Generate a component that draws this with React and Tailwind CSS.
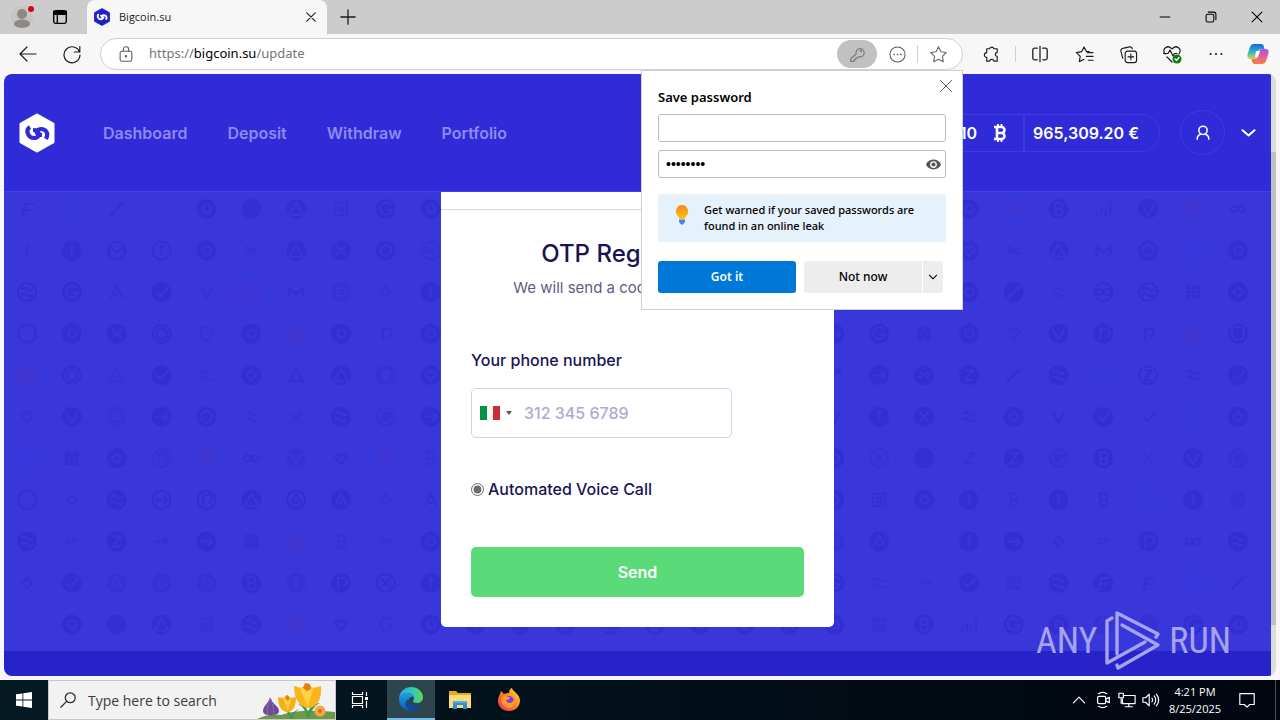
// App.jsx
import React, { useState } from 'react';

// Coin marks, each drawn in a 20x20 box
const MARKS = {
  a: 'M4 16L10 4l6 12M8 13h4',
  b: 'M7 4v12h4a3 3 0 0 0 0-6H7M11 10a3 3 0 0 0 0-6H5',
  c: 'M5 10l4 4 8-9',
  d: '',
  e: 'M4 7q3-3 6 0t6 0M4 13q3-3 6 0t6 0',
  f: 'M3 17h3L8 5h9M5 11h9',
  g: 'M15 6a6 6 0 1 0 1 5h-5',
  h: 'M4 4h3v3H4zM13 4h3v3h-3zM4 13h3v3H4zM13 13h3v3h-3zM10 3v14M3 10h14',
  i: 'M10 10c-2-4-7-4-7 0s5 4 7 0 7-4 7 0-5 4-7 0',
  j: 'M10 4l5 3v6l-5 3-5-3V7z',
  k: 'M10 16L4 8l3-3 3 3 3-3 3 3z',
  l: 'M10 5l5 5-5 5-5-5z',
  m: 'M3 15V6l7 6 7-6v9',
  n: 'M3 17v-5M8 17V9M12 17v-6M17 17V3',
  o: 'M10 6a4 4 0 1 0 1 0',
  p: 'M7 16V5h5a4 4 0 0 1 0 8',
  q: 'M10 5v10M8 7l2-2 2 2',
  r: 'M4 4h12v12H4zM8 8h4v4H8z',
  s: 'M3 17L17 3M12 4l4 4M4 13l3 3',
  t: 'M10 4l7 12H3z',
  u: 'M4 10h12M12 6l4 4-4 4',
  v: 'M4 5l6 11 6-11',
  w: 'M4 11a4 4 0 0 0 6-1 4 4 0 0 1 6-1M5 6l3 3M12 11l3 3',
  x: 'M5 5l10 10M15 5L5 15',
  y: 'M10 3l6 2v5c0 4-3 6-6 7-3-1-6-3-6-7V5z',
  z: 'M6 5h8l-8 10h8',
};

// lower case: bare mark, upper case: filled coin, "(" ring. Suffix: r red, b blue, f faint
const COIN_ROWS = [
  'f Cb s gr O D T rf G O | G T D O hr B n V Ir i',
  'qf Q (m (q O w T X J (wf | A Q L K w T m J Db O',
  '(e G a C vf Zr m (rf af Q | X D T O S ef (i (e h L',
  '(d O X (j yf O Dr O p O | U G h O kf V P p Or Y',
  'Dr (j tf C ef L t T (yf L | s U W Z s E Lb (z e C',
  'kf V (jf U J ef xf E Yf U | v Q X e L v C c lb L',
  'Db h L (pf Er i Vf k Er bf | O (xf D zf Z Gf B xf V Gf',
  '(d l E (u (p T (a A af a | O r O Q bf Q b rb Q hf',
  'E wf Z u U h Qr bf wf O | Of A rr Q U l w P i E',
  'l C Af Of Of B Qf P (x Q | G ef uf C hf E F f Ob s',
  'gr O D T rf E Vr k gf O | O hf B n G O Af Df G O',
];

// the middle columns share one run of coins
const MIDDLE = 'Q D Z T (a O L X';

const Coin = ({ code, x, y }) => {
  const ring = code[0] === '(';
  const body = ring ? code.slice(1) : code;
  const letter = body[0];
  const filled = !ring && letter === letter.toUpperCase();
  const tint = body[1];
  const color = tint === 'r' ? '#4c2cc0' : tint === 'b' ? '#2f3de0' : '#2c29cb';
  return (
    <g transform={`translate(${x} ${y})`} opacity={tint ? 0.3 : 0.5} fill="none" strokeWidth="2">
      {filled && <circle cx="10" cy="10" r="10" fill={color} />}
      {ring && <circle cx="10" cy="10" r="9" stroke={color} />}
      <path d={MARKS[letter.toLowerCase()]} stroke={filled ? '#3a37da' : color} />
    </g>
  );
};

const CoinPattern = () => (
  <svg className="absolute inset-0 h-full w-full" aria-hidden="true">
    {COIN_ROWS.map((row, r) =>
      row.replace('|', MIDDLE).split(' ').map((code, c) => (
        <Coin key={`${r}-${c}`} code={code} x={13 + c * 44.85} y={7 + r * 41.55} />
      ))
    )}
  </svg>
);

const Icon = ({ size = 20, children, className = '', width = 1.2 }) => (
  <svg
    width={size}
    height={size}
    viewBox="0 0 20 20"
    fill="none"
    stroke="currentColor"
    strokeWidth={width}
    strokeLinecap="round"
    strokeLinejoin="round"
    className={`shrink-0 ${className}`}
    aria-hidden="true"
  >
    {children}
  </svg>
);

const HexLogo = ({ className, hex, mark }) => (
  <svg viewBox="0 0 36 40" className={className} aria-hidden="true">
    <path d="M18 2L34 11v18L18 38 2 29V11z" fill={hex} stroke={hex} strokeWidth="3" strokeLinejoin="round" />
    <g fill="none" stroke={mark} strokeWidth="4.2">
      <path d="M11 14c-5 3-2 11 4 11 4 0 6-3 4-6-1-2-3-2-5-2" />
      <path d="M27 26c3-6 0-10-5-10-3 0-5 2-4 4 1 2 3 2 5 2" />
    </g>
  </svg>
);

const ToolButton = ({ label, children }) => (
  <button aria-label={label} className="flex h-8 w-11 items-center justify-center text-[#1b1b1b]">
    {children}
  </button>
);

const TabStrip = () => (
  <div className="flex h-[34px] bg-[#cccccc]">
    <button aria-label="Profile" className="flex w-11 items-center justify-center">
      <svg width="24" height="24" viewBox="0 0 24 24">
        <circle cx="12" cy="12" r="11" fill="#c8c4c2" />
        <circle cx="12" cy="9" r="5" fill="#8d8985" />
        <path d="M4 19c0-6 16-6 16 0 0 5-16 5-16 0z" fill="#8d8985" />
        <circle cx="21" cy="4" r="3" fill="#d1051b" />
      </svg>
    </button>
    <button aria-label="Tab actions" className="flex w-8 items-center justify-center">
      <Icon size={18} width={1.5}>
        <rect x="3" y="3" width="14" height="14" rx="2" />
        <path d="M3 4h14v3H3z" fill="currentColor" />
        <path d="M7 7v10" />
      </Icon>
    </button>
    <div className="ml-[11px] flex w-60 items-center rounded-t-lg bg-[#f7f7f7] pr-2 pl-1.5">
      <HexLogo className="h-[18px] w-[18px]" hex="#1d22c9" mark="#ffffff" />
      <span className="ml-2 flex-1 text-[11px] text-[#1b1b1b]">Bigcoin.su</span>
      <button aria-label="Close tab" className="flex h-4 w-4 items-center justify-center text-[#1b1b1b]">
        <Icon size={14} width={1.6}><path d="M4 4l12 12M16 4L4 16" /></Icon>
      </button>
    </div>
    <button aria-label="New tab" className="flex w-[42px] items-center justify-center text-[#1b1b1b]">
      <Icon size={18} width={1.4}><path d="M10 2v16M2 10h16" /></Icon>
    </button>
    <div className="ml-auto flex">
      <button aria-label="Minimize" className="flex w-[46px] items-center justify-center">
        <Icon size={14} width={1.5}><path d="M3 10h14" /></Icon>
      </button>
      <button aria-label="Restore" className="flex w-[46px] items-center justify-center">
        <Icon size={14} width={1.5}>
          <rect x="3" y="6" width="11" height="11" rx="2" />
          <path d="M6 3h8a3 3 0 0 1 3 3v8" />
        </Icon>
      </button>
      <button aria-label="Close" className="flex w-[46px] items-center justify-center">
        <Icon size={14} width={1.5}><path d="M3 3l14 14M17 3L3 17" /></Icon>
      </button>
    </div>
  </div>
);

const SavePassword = () => {
  const [password, setPassword] = useState('password');
  const [username, setUsername] = useState('');

  return (
    <section className="absolute top-full -right-px z-20 mt-px w-[322px] border border-[#cfcfcf] bg-white p-4 text-black">
      <button aria-label="Dismiss" className="absolute top-[7px] right-2 flex h-4 w-4 items-center justify-center text-[#5a5a5a]">
        <Icon size={16} width={1.2}><path d="M3 3l14 14M17 3L3 17" /></Icon>
      </button>
      <h2 className="text-[13px] leading-5 font-semibold">Save password</h2>
      <input
        aria-label="Username"
        value={username}
        onChange={(e) => setUsername(e.target.value)}
        className="mt-[7px] block h-7 w-full rounded-[3px] border border-[#bcbcbc] px-2 text-xs"
      />
      <div className="mt-2 flex h-7 items-center rounded-[3px] border border-[#bcbcbc] pr-1 pl-[7px]">
        <input
          aria-label="Password"
          type="password"
          value={password}
          onChange={(e) => setPassword(e.target.value)}
          className="min-w-0 flex-1 font-['Liberation_Sans'] text-[14px] outline-none"
        />
        <button aria-label="Show password" className="text-[#555]">
          <svg width="15" height="15" viewBox="0 0 16 16" aria-hidden="true" className="block">
            <path d="M0 8c3-7 13-7 16 0-3 7-13 7-16 0z" fill="currentColor" />
            <circle cx="8" cy="8" r="3.6" fill="#fff" />
            <circle cx="8" cy="8" r="2.2" fill="currentColor" />
          </svg>
        </button>
      </div>
      <div className="mt-4 flex h-12 items-center rounded-[3px] bg-[#e5f1fb] pr-2 pl-4">
        <svg width="16" height="22" viewBox="0 0 16 22" aria-hidden="true" className="-mt-1.5 shrink-0">
          <defs>
            <linearGradient id="bulb" x1="0" y1="0" x2="0" y2="1">
              <stop offset="0" stopColor="#f28a1c" />
              <stop offset="1" stopColor="#ffc20a" />
            </linearGradient>
          </defs>
          <path d="M8 1a6.300 6.300 0 0 0-4 11l1.500 3h5L12 12A6.300 6.300 0 0 0 8 1z" fill="url(#bulb)" />
          <path d="M5 15.500h6v2.500l-2 2.500H7L5 18z" fill="#4a83ea" />
        </svg>
        <p className="ml-3.5 text-[11px] leading-4 font-medium">
          Get warned if your saved passwords are
          <br />
          found in an online leak
        </p>
      </div>
      <div className="mt-[19px] flex h-8 text-[12px]">
        <button className="w-[138px] rounded-[3px] bg-[#0078d7] font-semibold text-white">Got it</button>
        <button className="ml-2 w-[118px] rounded-l-[3px] bg-[#ededed] font-medium">Not now</button>
        <button aria-label="More options" className="ml-px flex w-5 items-center justify-center rounded-r-[3px] bg-[#ededed]">
          <Icon size={12} width={1.8}><path d="M4 7l6 6 6-6" /></Icon>
        </button>
      </div>
    </section>
  );
};

const Toolbar = () => (
  <div className="flex h-10 items-center bg-[#f7f7f7] pl-1.5 font-['Noto_Sans','Open_Sans',sans-serif]">
    <ToolButton label="Back">
      <Icon size={20}><path d="M18 10H2M9 3l-7 7 7 7" /></Icon>
    </ToolButton>
    <ToolButton label="Refresh">
      <Icon size={20}><path d="M17.500 8A8 8 0 1 0 18 11M17.800 2.500V8h-5.500" /></Icon>
    </ToolButton>
    <div className="relative ml-1.5 flex h-8 flex-1 items-center rounded-full border border-[#d0d0d0] bg-white pr-1">
      <button aria-label="Site information" className="flex w-12 items-center justify-center pl-0.5 text-[#5c5c5c]">
        <Icon size={18}>
          <rect x="3.500" y="7" width="13" height="11" rx="2" />
          <path d="M7 7V5a3 3 0 0 1 6 0v2" />
          <circle cx="10" cy="12.500" r=".7" fill="currentColor" />
        </Icon>
      </button>
      <div role="textbox" aria-label="Address" tabIndex={0} className="flex-1 text-[13px] text-[#767676]">
        https://<span className="text-black">bigcoin.su</span>/update
      </div>
      <button aria-label="Saved passwords" className="flex h-7 w-10 items-center justify-center rounded-full bg-[#c1c1c1] text-[#7c7c7c]">
        <Icon size={17} width={1.4}>
          <path d="M8.500 9.500a4.800 4.800 0 1 1 3 3L10 14H8v2H6v2H2v-3z" />
          <circle cx="14" cy="6" r=".7" />
        </Icon>
      </button>
      <button aria-label="More site actions" className="flex h-7 w-10 items-center justify-center text-[#5c5c5c]">
        <Icon size={19} width={1.1}>
          <circle cx="10" cy="10" r="8" />
          <path d="M6.500 10h.01M10 10h.01M13.500 10h.01" strokeWidth="1.800" />
        </Icon>
      </button>
      <span className="h-[18px] w-px bg-[#cfcfcf]" />
      <button aria-label="Add to favorites" className="flex h-7 w-10 items-center justify-center text-[#6c6c6c]">
        <Icon size={19}>
          <path d="M10 1.800l2.500 5.300 5.700.8-4.100 4 1 5.700-5.100-2.700-5.100 2.700 1-5.700-4.100-4 5.700-.8z" />
        </Icon>
      </button>
      <SavePassword />
    </div>
    <div className="ml-1.5 flex items-center">
      <ToolButton label="Extensions">
        <Icon size={19}>
          <path d="M5 4h3a2.300 2.300 0 0 1 4.500 0H16v4a1.900 1.900 0 0 0 0 4v5h-3.500a2.300 2.300 0 0 0-4.500 0H5v-4a2.300 2.300 0 1 1 0-5z" />
        </Icon>
      </ToolButton>
      <span className="mx-0.5 h-4 w-px bg-[#cfcfcf]" />
      <ToolButton label="Split screen">
        <Icon size={18} width={1.4}>
          <path d="M7 3.500H4a2 2 0 0 0-2 2v9a2 2 0 0 0 2 2h3M13 3.500h3a2 2 0 0 1 2 2v9a2 2 0 0 1-2 2h-3M10 1.500v17" />
        </Icon>
      </ToolButton>
      <ToolButton label="Favorites">
        <Icon size={19}>
          <path d="M15 7l-3-.3L9.500 2 7 7l-5.500 1 4 4-1 5.500 5-2.500M13 8h6M12 12h7M14 16h5" />
        </Icon>
      </ToolButton>
      <ToolButton label="Collections">
        <Icon size={19}>
          <rect x="6.500" y="6.500" width="12" height="12" rx="2.500" />
          <path d="M12.500 9.500v6M9.500 12.500h6M4 14l-2-7.500a2.500 2.500 0 0 1 2-3L11 2a2.500 2.500 0 0 1 3 2" />
        </Icon>
      </ToolButton>
      <ToolButton label="Browser essentials">
        <Icon size={20}>
          <path d="M3 10C-1 5 6 0 10 5c4-5 11 0 7 5M5 13l5 5M1.500 9.500H6L8 6l3 6 1.500-2.500H15" />
          <circle cx="15" cy="15" r="4.500" fill="#0f7b10" stroke="none" />
          <path d="M13 15l1.500 1.500 2.500-3" stroke="#fff" />
        </Icon>
      </ToolButton>
      <ToolButton label="Settings and more">
        <Icon size={18}><path d="M4 10h.01M10 10h.01M16 10h.01" strokeWidth="2.400" /></Icon>
      </ToolButton>
      <button aria-label="Copilot" className="flex w-[42px] items-center justify-center pr-0.5">
        <svg width="22" height="22" viewBox="0 0 22 22" aria-hidden="true">
          <defs>
            <linearGradient id="cop1" x1="0" y1="0" x2="0" y2="1">
              <stop offset="0" stopColor="#1b63d8" />
              <stop offset=".5" stopColor="#2bb2d8" />
              <stop offset="1" stopColor="#d7d93c" />
            </linearGradient>
            <linearGradient id="cop2" x1="0" y1="1" x2="0" y2="0">
              <stop offset="0" stopColor="#f5823c" />
              <stop offset=".5" stopColor="#ee5aa0" />
              <stop offset="1" stopColor="#9a5ae8" />
            </linearGradient>
          </defs>
          <path d="M7 1h7c2 0 2.500 1 3 3l.5 2h-3c-2 0-3 1-3.500 3l-1 4c-.5 2-1 3-3 3H3c-3 0-3-3-2-6l2-6c.7-2 2-3 4-3z" fill="url(#cop1)" />
          <path d="M15 21H8c-2 0-2.500-1-3-3l-.5-2h3c2 0 3-1 3.500-3l1-4c.5-2 1-3 3-3h4c3 0 3 3 2 6l-2 6c-.7 2-2 3-4 3z" fill="url(#cop2)" />
          <path d="M9 8h4l-2 6H8z" fill="#fff" />
        </svg>
      </button>
    </div>
  </div>
);

const NAV = ['Dashboard', 'Deposit', 'Withdraw', 'Portfolio'];

const SiteHeader = () => (
  <header className="flex h-[118px] items-center border-b border-[#4441de] bg-[#2f2bd8] px-[15px] font-['Inter',sans-serif]">
    <a href="#home" aria-label="Bigcoin">
      <HexLogo className="h-10 w-9" hex="#ffffff" mark="#2f2bd8" />
    </a>
    <nav className="ml-12 flex gap-10 text-base font-semibold text-[#8d8af0]">
      {NAV.map((item) => (
        <a key={item} href={`#${item.toLowerCase()}`}>{item}</a>
      ))}
    </nav>
    <div className="ml-auto flex h-[38px] items-center rounded-full border border-[#3f3bdf] text-base font-semibold text-white">
      <span className="flex h-full items-center pr-4 pl-10">
        10
        <svg width="14" height="18" viewBox="0 0 14 18" className="ml-4" aria-hidden="true" fill="none" stroke="currentColor">
          <path d="M1 3h7.500a2.800 2.800 0 0 1 0 6H4M8.500 9a3 3 0 0 1 0 6H1M4 3v12" strokeWidth="2.600" />
          <path d="M5 0v3M8.500 0v3M5 15v3M8.500 15v3" strokeWidth="1.800" />
        </svg>
      </span>
      <span className="flex h-full items-center border-l-2 border-[#3f3bdf] pr-5 pl-2">965,309.20 €</span>
    </div>
    <button aria-label="Account" className="ml-5 flex h-[45px] w-[45px] items-center justify-center rounded-full border border-[#3f3bdf] text-white">
      <Icon size={18} width={1.7}>
        <circle cx="10" cy="7" r="4.600" />
        <path d="M3.500 17c0-3 2-5 4-5.500M16.500 17c0-3-2-5-4-5.500" />
      </Icon>
    </button>
    <button aria-label="Open menu" className="ml-4 text-white">
      <Icon size={15} width={2.8}><path d="M2 7l8 7 8-7" /></Icon>
    </button>
  </header>
);

const OtpCard = () => {
  const [phone, setPhone] = useState('');

  return (
    <form
      onSubmit={(e) => e.preventDefault()}
      className="relative mx-auto mb-6 w-[393px] rounded-b-[5px] bg-white font-['Inter',sans-serif] text-[#1a1453]"
    >
      <div className="h-[18px] border-b border-[#d5d4e8]" />
      <div className="px-[30px] pt-7 pb-[30px]">
        <h1 className="text-center text-2xl font-medium">OTP Registration</h1>
        <p className="mt-[6px] text-center text-[15px] leading-6 text-[#5f5b87]">We will send a code to your phone.</p>
        <label htmlFor="phone" className="mt-12 block text-base font-medium">
          Your phone number
        </label>
        <div className="mt-4 flex h-[50px] w-[261px] items-center rounded-[5px] border border-[#d3d1ea] pl-2">
          <button type="button" aria-label="Country: Italy" className="flex items-center gap-1.5">
            <svg width="20" height="14" viewBox="0 0 20 14" aria-hidden="true">
              <path d="M0 0h7v14H0z" fill="#009246" />
              <path d="M7 0h6v14H7z" fill="#f4f5f0" />
              <path d="M13 0h7v14h-7z" fill="#ce2b37" />
            </svg>
            <svg width="6" height="4" viewBox="0 0 6 4" aria-hidden="true">
              <path d="M0 0h6L3 4z" fill="#555" />
            </svg>
          </button>
          <input
            id="phone"
            type="tel"
            value={phone}
            onChange={(e) => setPhone(e.target.value)}
            placeholder="312 345 6789"
            className="ml-3 min-w-0 flex-1 text-base font-medium outline-none placeholder:text-[#aeabd3]"
          />
        </div>
        <label className="mt-[39px] flex items-center text-base font-medium">
          <input type="radio" name="method" defaultChecked className="mr-1 h-[13px] w-[13px] accent-[#6b6b6b]" />
          Automated Voice Call
        </label>
        <button type="submit" className="mt-[46px] h-[50px] w-full rounded-[5px] bg-[#5ada78] text-base font-semibold text-white">
          Send
        </button>
      </div>
    </form>
  );
};

const Watermark = () => (
  <div className="absolute right-10 bottom-0 flex items-center gap-2 font-['Roboto_Condensed','Liberation_Sans_Narrow','Roboto',sans-serif] text-[36px] leading-[70px] text-[#a5a3ee]">
    <span>ANY</span>
    <svg width="56" height="62" viewBox="0 0 56 62" fill="none" stroke="currentColor" strokeWidth="3.4" strokeLinejoin="round" strokeLinecap="round" aria-hidden="true">
      <path d="M12 44V3l41 21-2 3" />
      <path d="M17 15l36 20-40 23-1-3" />
      <path d="M7 8l-5 3v42l38-21" />
    </svg>
    <span>RUN</span>
  </div>
);

const Taskbar = () => (
  <footer className="flex h-10 bg-linear-to-r from-[#031a23] to-[#01060f] text-white">
    <button aria-label="Start" className="flex w-12 items-center justify-center">
      <svg width="16" height="16" viewBox="0 0 16 16" fill="#fff" aria-hidden="true">
        <path d="M0 2.300L6.500 1.400v6.200H0zM7.300 1.300L16 0v7.600H7.300zM0 8.400h6.500v6.200L0 13.700zM7.300 8.400H16V16l-8.700-1.300z" />
      </svg>
    </button>
    <div className="flex w-72 items-center border border-[#c8c8c8] bg-[#f2f2f2] pl-2.5 text-[#2b2b2b]">
      <Icon size={18} width={1.4}>
        <circle cx="12.500" cy="7.500" r="5.500" />
        <path d="M8.500 11.500L2 18" />
      </Icon>
      <input
        aria-label="Search"
        placeholder="Type here to search"
        className="ml-[11px] min-w-0 flex-1 text-[14px] outline-none placeholder:text-[#3b3b3b]"
      />
      <svg width="80" height="38" viewBox="0 0 80 38" aria-hidden="true" className="shrink-0">
        <path d="M2 38c8-4 14-5 24-4 14-5 34-5 54-3v7z" fill="#6c9a4a" />
        <path d="M35 38c-1-6-4-9-8-11 6 0 8 4 9 8 2-4 5-6 8-7-4 3-6 6-6 10zM52 36c-2-8-5-11-9-13 6 0 9 4 10 8 2-6 8-9 12-9-6 3-9 8-10 14z" fill="#3f9a4c" />
        <path d="M15 16c1 6 9 9 9 14 0 6-16 6-16 0 0-5 6-8 7-14z" fill="#6d4a94" />
        <path d="M15 18c-2 6-4 10-2 16M16 18c1 6 4 10 2 16" stroke="#8f6fb5" fill="none" />
        <path d="M23 16l5 1 4-3 4 3 5-1c0 8-2 14-8 15-7 0-10-7-10-15z" fill="#f6ae1b" />
        <path d="M28 18l4-4 4 4-3 12z" fill="#fbcf3a" />
        <path d="M30 17l2-3 3 3-2 3z" fill="#e97f1a" />
        <path d="M39 5l7 2 6-4 6 4 8-2c1 12-3 21-12 22-10 0-15-10-15-22z" fill="#f9b51c" />
        <path d="M45 8l7-5 6 5-5 18z" fill="#fdd244" />
        <path d="M48 7l2-5 5 1 1 5-4 2z" fill="#ea7a12" />
        <circle cx="65" cy="30" r="5.500" fill="#f3a746" />
        <circle cx="65" cy="30" r="2" fill="#d8691c" />
      </svg>
    </div>
    <button aria-label="Task view" className="flex w-12 items-center justify-center">
      <svg width="18" height="18" viewBox="0 0 18 18" fill="none" stroke="#fff" strokeWidth="1.200" aria-hidden="true">
        <path d="M1.500 1v2.500h10V1M1.500 17v-2.500h10V17M1.500 5.500h10v7h-10zM15.500 1v4M15.500 10v7" />
        <path d="M14 6h3v3h-3z" fill="#fff" stroke="none" />
      </svg>
    </button>
    <button aria-label="Microsoft Edge" className="ml-[3px] flex w-12 items-center justify-center border-b-2 border-[#76b9ed] bg-[#2d454d]">
      <svg width="24" height="24" viewBox="0 0 24 24" aria-hidden="true">
        <defs>
          <linearGradient id="edge1" x1="0" y1="0" x2="1" y2="0">
            <stop offset="0" stopColor="#2aa9e0" />
            <stop offset=".6" stopColor="#36c9b4" />
            <stop offset="1" stopColor="#62d84e" />
          </linearGradient>
          <linearGradient id="edge2" x1="0" y1="0" x2="0" y2="1">
            <stop offset="0" stopColor="#1fa0e4" />
            <stop offset="1" stopColor="#0b5cb5" />
          </linearGradient>
        </defs>
        <path d="M0 11C1 4 6 0 12 0c7 0 12 5 12 10 0 4-3 6-6 6-3 0-4-1-4-2s1-1 1-3c0-2-2-5-6-5-4 0-7 2-9 5z" fill="url(#edge1)" />
        <path d="M0 12c1-4 4-6 8-6 4 0 6 2 7 4-3-1-6 1-6 5 0 4 4 7 8 7-7 4-17 0-17-10z" fill="url(#edge2)" />
        <path d="M9 12c-1 5 4 8 13 6-3 5-9 7-13 4-4-3-3-8 0-10z" fill="#12489c" />
      </svg>
    </button>
    <button aria-label="File Explorer" className="ml-px flex w-12 items-center justify-center">
      <svg width="22" height="20" viewBox="0 0 22 20" aria-hidden="true">
        <path d="M0 1h7l2 2h13v15H0z" fill="#e9a825" />
        <path d="M0 5h22v13H0z" fill="#fbdb76" />
        <path d="M4 11h14v8h-4v-4H8v4H4z" fill="#2f8fd8" />
        <path d="M4 11h14v2H4z" fill="#58aee8" />
      </svg>
    </button>
    <button aria-label="Firefox" className="ml-px flex w-12 items-center justify-center">
      <svg width="24" height="24" viewBox="0 0 24 24" aria-hidden="true">
        <defs>
          <linearGradient id="fox" x1="1" y1="0" x2="0" y2="1">
            <stop offset="0" stopColor="#ffe04a" />
            <stop offset=".45" stopColor="#ff8a1f" />
            <stop offset="1" stopColor="#f0246e" />
          </linearGradient>
        </defs>
        <path d="M3 6l1-3 3 3c2-1 4-1 5-1 0-3 2-5 3-5 0 3 7 5 8 12 0 7-5 11-11 11S1 19 1 13c0-3 1-5 2-7z" fill="url(#fox)" />
        <circle cx="12" cy="13" r="5" fill="#7a3fe0" />
        <path d="M5 9c3-2 5 0 7 0 2 1 0 3-3 3 1 4 7 4 8-1 2 5-1 9-5 9-5 0-9-5-7-11z" fill="#ff9a24" />
      </svg>
    </button>
    <div className="ml-auto flex items-center">
      <button aria-label="Show hidden icons" className="flex w-6 justify-center">
        <Icon size={14} width={1.7}><path d="M2 14l8-8 8 8" /></Icon>
      </button>
      <button aria-label="Meet Now" className="flex w-6 justify-center">
        <Icon size={18} width={1.4}>
          <rect x="4" y="6" width="9" height="8" rx="1.500" />
          <path d="M13 9l4-2v6l-4-2M5 3q5-3 9 0M5 17q5 3 9 0" />
        </Icon>
      </button>
      <button aria-label="Network" className="flex w-6 justify-center">
        <Icon size={18} width={1.3}>
          <path d="M7 5h12v9H5V9M12 14v3M8 17.500h8M1 2.500h5v5H1zM3.500 7.500V14" />
        </Icon>
      </button>
      <button aria-label="Volume" className="flex w-6 justify-center">
        <Icon size={18} width={1.3}>
          <path d="M1 7.500h3l4-4v13l-4-4H1zM11 8q1.500 2 0 4M13.500 5.500q3.500 4.500 0 9M16 3.500q5 6.500 0 13" />
        </Icon>
      </button>
      <div className="w-16 text-center text-[11px] leading-[17px]">
        <p>4:21 PM</p>
        <p>8/25/2025</p>
      </div>
      <button aria-label="Notifications" className="flex w-10 justify-center">
        <Icon size={18} width={1.3}><path d="M2 3h16v12h-5l-3 3-3-3H2z" /></Icon>
      </button>
      <span className="ml-2 h-full w-[5px] border-l border-[#4a5058]" />
    </div>
  </footer>
);

const App = () => (
  <div className="flex min-h-screen flex-col bg-[#f7f7f7] font-['Open_Sans','Noto_Sans',sans-serif]">
    <TabStrip />
    <Toolbar />
    <div className="mx-1 mb-1 flex flex-1 overflow-hidden rounded-lg">
      <div className="relative flex min-w-0 flex-1 flex-col">
        <SiteHeader />
        <main className="relative flex-1 bg-[#3a37da]">
          <CoinPattern />
          <OtpCard />
        </main>
        <div className="h-[25px] bg-[#2623c8]" />
        <Watermark />
      </div>
      <div className="w-[5px] bg-[#dcdce0] pt-[78px] pb-[51px]">
        <div className="h-full bg-[#bfbfc2]" />
      </div>
    </div>
    <Taskbar />
  </div>
);

export default App;
